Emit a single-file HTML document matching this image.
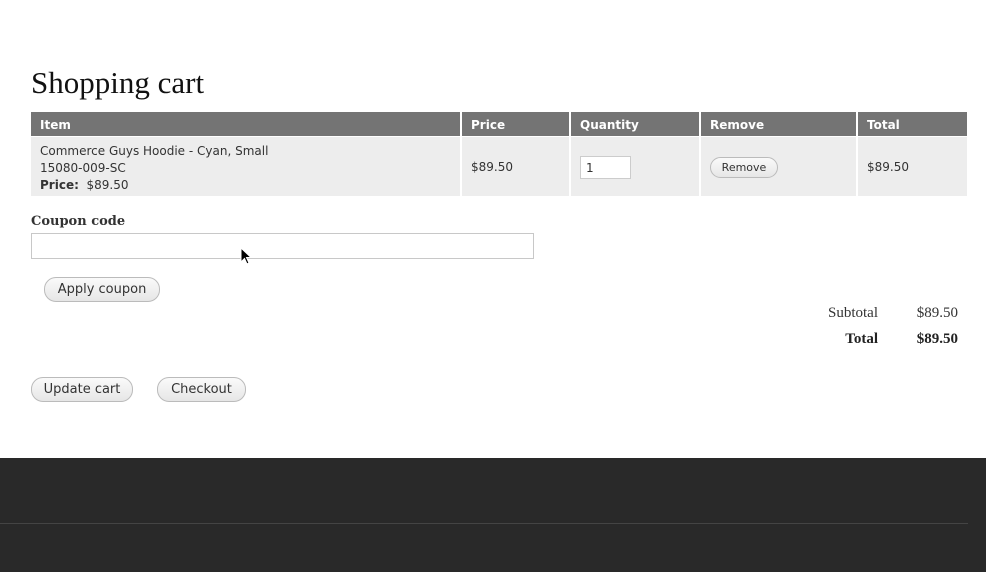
<!DOCTYPE html>
<html><head><style>
*{margin:0;padding:0;box-sizing:border-box}
body{width:986px;height:572px;background:#fff;position:relative;overflow:hidden;font-family:"DejaVu Sans","Liberation Sans",sans-serif;color:#333}
.a{position:absolute}
.hd{background:#747474;color:#fff;font-weight:bold;font-size:12px;height:24px;top:112px;padding:6px 9px}
.cell{background:#ededed;top:137px;height:59px;font-size:12px}
.btn{border:1px solid #bbb;border-radius:12px;background:linear-gradient(#fafafa,#e6e6e6);font-size:13px;text-align:center;color:#333}
.tt{font-family:"Liberation Serif",serif;font-size:15px;text-align:right}
</style></head><body>
<div class="a" style="left:31px;top:65px;font-family:'Liberation Serif',serif;font-size:31px;color:#111">Shopping cart</div>

<div class="a hd" style="left:31px;width:429px">Item</div>
<div class="a hd" style="left:462px;width:107px">Price</div>
<div class="a hd" style="left:571px;width:128px">Quantity</div>
<div class="a hd" style="left:701px;width:155px">Remove</div>
<div class="a hd" style="left:858px;width:109px">Total</div>

<div class="a cell" style="left:31px;width:429px;padding:6px 9px;line-height:17px">Commerce Guys Hoodie - Cyan, Small<br>15080-009-SC<br><b>Price:</b>&nbsp; $89.50</div>
<div class="a cell" style="left:462px;width:107px;padding:23px 9px">$89.50</div>
<div class="a cell" style="left:571px;width:128px"><div class="a" style="left:9px;top:19px;width:51px;height:23px;background:#fff;border:1px solid #ccc;font-size:12px;padding:4px 5px">1</div></div>
<div class="a cell" style="left:701px;width:155px"><div class="a btn" style="left:9px;top:20px;width:68px;height:21px;font-size:11px;line-height:20px">Remove</div></div>
<div class="a cell" style="left:858px;width:109px;padding:23px 9px">$89.50</div>

<div class="a" style="left:31px;top:214px;font-family:'DejaVu Serif',serif;font-weight:bold;font-size:13px;color:#333">Coupon code</div>
<div class="a" style="left:31px;top:233px;width:503px;height:26px;border:1px solid #c8c8c8;background:#fff"></div>
<svg class="a" style="left:240px;top:247px" width="12" height="18" viewBox="0 0 12 18"><path d="M1 1 L1 15 L4.5 11.5 L7 17 L9 16 L6.5 10.5 L11 10.5 Z" fill="#000" stroke="#fff" stroke-width="1"/></svg>

<div class="a btn" style="left:44px;top:277px;width:116px;height:25px;line-height:24px">Apply coupon</div>

<div class="a tt" style="left:780px;top:305px;width:98px;color:#333">Subtotal</div>
<div class="a tt" style="left:880px;top:305px;width:78px;color:#333">$89.50</div>
<div class="a tt" style="left:780px;top:331px;width:98px;font-weight:bold;color:#222">Total</div>
<div class="a tt" style="left:880px;top:331px;width:78px;font-weight:bold;color:#222">$89.50</div>

<div class="a btn" style="left:31px;top:377px;width:102px;height:25px;line-height:24px">Update cart</div>
<div class="a btn" style="left:157px;top:377px;width:89px;height:25px;line-height:24px">Checkout</div>

<div class="a" style="left:0;top:458px;width:986px;height:114px;background:#292929"></div>
<div class="a" style="left:0;top:523px;width:968px;height:1px;background:#444"></div>
</body></html>
